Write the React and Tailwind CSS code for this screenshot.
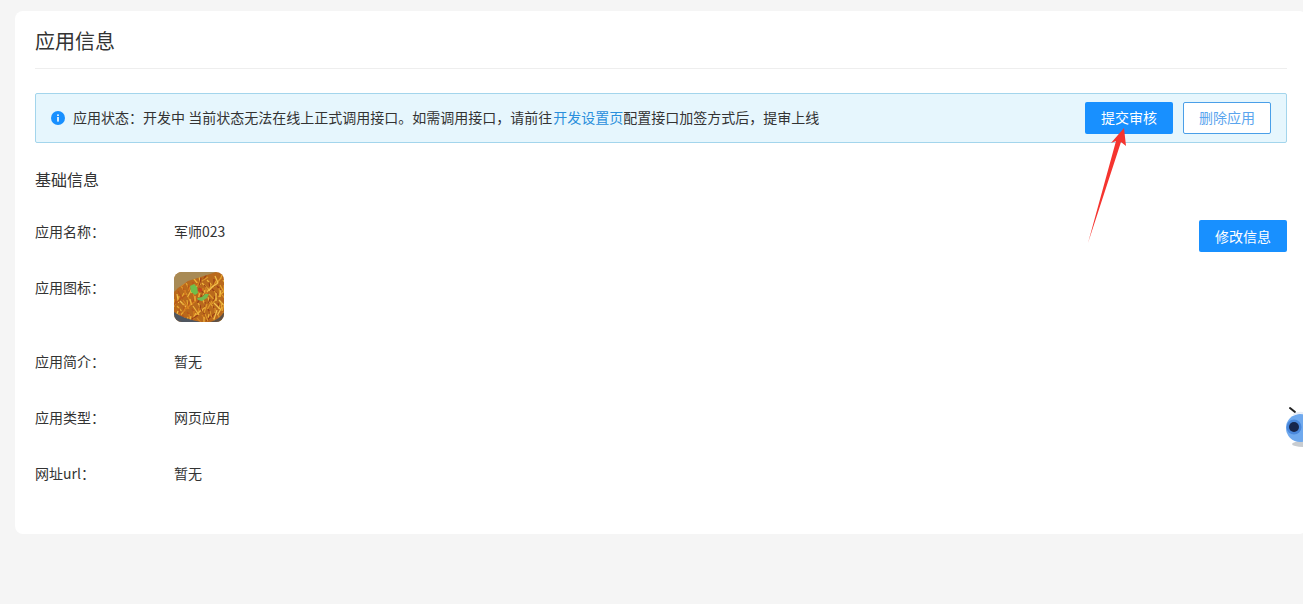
const font = { fontFamily: '"Noto Sans CJK SC", sans-serif' };

function Food() {
  const fries = [];
  const cols = ['#e09a2a', '#f0b53c', '#b8561a', '#f4c24e', '#9c3f16', '#d98420', '#e8a830'];
  for (let i = 0; i < 150; i++) {
    const x = (i * 37) % 52;
    const y = 3 + ((i * 29) % 44);
    const a = ((i * 53) % 9) - 4;
    const b = 4 + ((i * 11) % 6);
    fries.push(
      <line key={i} x1={x} y1={y} x2={x + a * 1.5} y2={y + b} stroke={cols[i % 7]} strokeWidth="1.2" />
    );
  }
  return (
    <svg width="50" height="50" viewBox="0 0 50 50" className="block rounded-lg">
      <rect width="50" height="50" fill="#b9691c" />
      {fries}
      <path d="M0 0H42L30 4 14 9 4 16 0 20Z" fill="#a88a55" />
      <path d="M16 14l4-2 3 3 1 6-3 2-4-3Z" fill="#6fbf4a" />
      <path d="M23 26l5-1 3-3 4 0-2 4-5 3-4-1Z" fill="#74b84e" />
      <circle cx="26" cy="18" r="2" fill="#c8401f" />
      <path d="M0 40C8 46 18 48 27 50H0Z" fill="#4f5660" />
      <path d="M50 40V50H36C43 48 47 45 50 40Z" fill="#5d5148" />
    </svg>
  );
}

function Row({ label, children, className }) {
  return (
    <div className={`flex text-sm text-[#333] ${className}`}>
      <div className="w-[139px] shrink-0">{label}</div>
      <div>{children}</div>
    </div>
  );
}

export default function App() {
  return (
    <div className="relative h-[604px] w-full overflow-hidden bg-[#f5f5f5] pl-[15px] pt-[11px]" style={font}>
      <div className="h-[523px] w-[1292px] rounded-lg bg-white px-5">
        <div className="h-[58px] border-b border-[#eeeeee] pt-[15px] text-xl leading-[30px] text-[#333]">应用信息</div>
        <div className="mt-[24px] flex h-[50px] items-center justify-between rounded-[2px] border border-[#a3d5ec] bg-[#e6f6fd] px-[15px]">
          <div className="mb-[2px] flex items-center text-sm text-[#333]">
            <svg width="14" height="14" viewBox="0 0 14 14" className="mr-2 mt-[2px]">
              <circle cx="7" cy="7" r="7" fill="#1890ff" />
              <rect x="6.2" y="6" width="1.6" height="4.6" fill="#fff" />
              <rect x="6.2" y="3.4" width="1.6" height="1.6" fill="#fff" />
            </svg>
            <span>应用状态：开发中 当前状态无法在线上正式调用接口。如需调用接口，请前往<span className="ml-px text-[#2a8fdc]">开发设置页</span>配置接口加签方式后，提审上线</span>
          </div>
          <div className="flex gap-[10px]">
            <button className="h-8 w-[88px] rounded-[2px] bg-[#1890ff] pb-[2px] text-sm text-white">提交审核</button>
            <button className="h-8 w-[88px] rounded-[2px] border border-[#4a9fe8] bg-white pb-[2px] text-sm text-[#5aa5ee]">删除应用</button>
          </div>
        </div>
        <div className="mt-[24px] text-base leading-6 text-[#333]">基础信息</div>
        <div className="relative">
          <Row label="应用名称：" className="mt-[29px] leading-[22px]">军师023</Row>
          <button className="absolute right-0 top-0 h-8 w-[88px] rounded-[2px] bg-[#1890ff] pb-[1px] text-sm text-white">修改信息</button>
          <Row label="应用图标：" className="mt-[34px] leading-[22px]"><div className="-mt-[4px]"><Food /></div></Row>
          <Row label="应用简介：" className="mt-[28px] leading-[22px]">暂无</Row>
          <Row label="应用类型：" className="mt-[34px] leading-[22px]">网页应用</Row>
          <Row label="网址url：" className="mt-[34px] leading-[22px]">暂无</Row>
        </div>
      </div>
      <svg width="60" height="120" viewBox="0 0 60 120" className="absolute left-[1080px] top-[125px]">
        <path d="M8 118 L36 16 L31 18 L44 3 L46 21 L41 17 Z" fill="#f5342f" />
      </svg>
      <svg width="20" height="46" viewBox="0 0 20 46" className="absolute left-[1283px] top-[405px]">
        <path d="M7 3 L12 7" stroke="#222" strokeWidth="2" strokeLinecap="round" />
        <ellipse cx="20" cy="39" rx="11" ry="3" fill="#c8ccd0" />
        <ellipse cx="17" cy="23" rx="14" ry="14" fill="#6fa9ee" />
        <circle cx="11" cy="22" r="7.5" fill="#4a88dc" />
        <circle cx="11" cy="22" r="5" fill="#17264c" />
        <path d="M10 10 Q15 7 20 8" stroke="#e8eef8" strokeWidth="2" fill="none" />
      </svg>
    </div>
  );
}
